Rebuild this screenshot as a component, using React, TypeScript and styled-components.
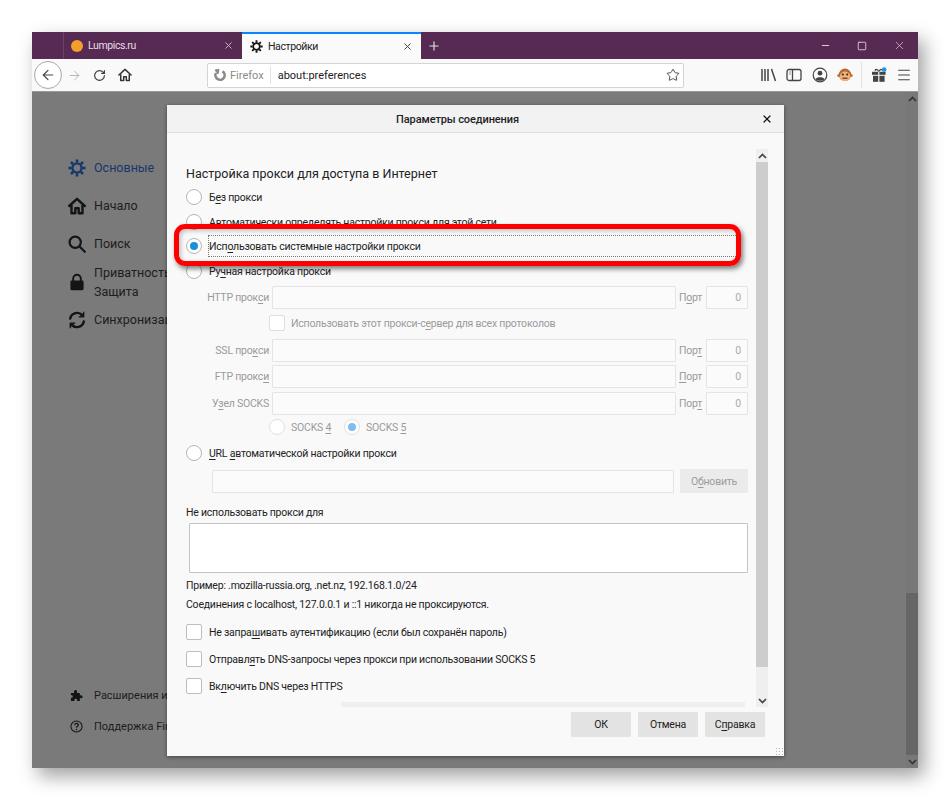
import React from 'react'
import styled, { createGlobalStyle } from 'styled-components'
import { ArrowLeft, ArrowRight, RotateCw, Star, Plus, X, Minus, Square, Menu } from 'lucide-react'

const Global = createGlobalStyle`
	html, body {
		margin: 0;
		padding: 0;
		background: #fff;
	}
	body {
		width: 950px;
		height: 800px;
		overflow: hidden;
		font-family: Roboto, "Noto Sans", sans-serif;
	}
	u {
		text-underline-offset: 2px;
		text-decoration-thickness: 1px;
	}
`

const Stage = styled.div`
	width: 950px;
	height: 800px;
	padding: 32px;
	box-sizing: border-box;
`

const Window = styled.div`
	width: 886px;
	height: 736px;
	display: flex;
	flex-direction: column;
	box-shadow: 6px 8px 18px rgba(0, 0, 0, 0.38);
`

const TabBar = styled.div`
	height: 27px;
	flex: none;
	background: #572a53;
	display: flex;
	align-items: stretch;
	padding-left: 31px;
`

const Tab = styled.div<{ $active?: boolean }>`
	width: 179px;
	box-sizing: border-box;
	display: flex;
	align-items: center;
	gap: 5px;
	padding: ${p => (p.$active ? '0 8px 0 8px' : '0 8px 0 7px')};
	font-size: 10.5px;
	letter-spacing: -0.4px;
	color: ${p => (p.$active ? '#222' : '#e6dce6')};
	background: ${p => (p.$active ? '#fafafa' : 'transparent')};
	border-top: ${p => (p.$active ? '2px solid #0a84ff' : 'none')};
	border-left: ${p => (p.$active ? 'none' : '1px solid #6b4268')};
`

const TabTitle = styled.span`
	flex: 1;
`

const Favicon = styled.span`
	width: 12px;
	height: 12px;
	border-radius: 50%;
	background: #f59d2d;
`

const NewTab = styled.div`
	width: 26px;
	display: flex;
	align-items: center;
	justify-content: center;
	color: #e6dce6;
`

const WindowButtons = styled.div`
	margin-left: auto;
	display: flex;
	align-items: center;
	gap: 26px;
	padding-right: 12px;
	color: #e6dce6;
`

const Toolbar = styled.div`
	height: 32px;
	flex: none;
	background: #f9f9fa;
	border-bottom: 1px solid #9a9a9a;
	display: flex;
	align-items: center;
	padding-left: 2px;
`

const BackButton = styled.div`
	width: 26px;
	height: 26px;
	border-radius: 50%;
	border: 1px solid #a8a8a8;
	background: #fff;
	display: flex;
	align-items: center;
	justify-content: center;
	color: #444;
`

const NavButton = styled.div<{ $dim?: boolean }>`
	width: 25px;
	display: flex;
	justify-content: center;
	color: ${p => (p.$dim ? '#b5b5b5' : '#3a3a3a')};
`

const UrlBar = styled.div`
	margin-left: 70px;
	width: 477px;
	height: 25px;
	box-sizing: border-box;
	flex: none;
	background: #fff;
	border: 1px solid #d4d4d6;
	border-radius: 2px;
	display: flex;
	align-items: center;
	padding: 0 3px 0 5px;
	font-size: 11px;
	color: #222;
`

const Identity = styled.div`
	display: flex;
	align-items: center;
	gap: 3px;
	color: #8a8a8a;
	padding-right: 6px;
	margin-right: 7px;
	border-right: 1px solid #e2e2e2;
	height: 18px;
`

const UrlText = styled.span`
	flex: 1;
`

const ToolIcons = styled.div`
	flex: 1;
	display: flex;
	align-items: center;
	padding-left: 72px;
	color: #444;
`

const ToolIcon = styled.div`
	width: 25.5px;
	flex: none;
	display: flex;
	justify-content: center;
`

const ToolSep = styled.div`
	width: 1px;
	height: 26px;
	background: #e4e4e4;
	margin: 0 4px 0 3px;
`

const Content = styled.div`
	flex: 1;
	min-height: 0;
	background: #7a7a7a;
	display: flex;
	position: relative;
`

const Sidebar = styled.nav`
	width: 874px;
	box-sizing: border-box;
	padding: 66px 0 32px 36px;
	display: flex;
	flex-direction: column;
	color: #1d1d1d;
	font-size: 12.5px;
`

const NavItem = styled.div<{ $active?: boolean; $gap: number }>`
	display: flex;
	align-items: center;
	gap: 8px;
	white-space: nowrap;
	line-height: 19px;
	margin-bottom: ${p => p.$gap}px;
	color: ${p => (p.$active ? '#17376b' : '#1d1d1d')};
`

const NavLabel = styled.div`
	display: flex;
	flex-direction: column;
`

const FootItem = styled(NavItem)`
	font-size: 11px;
	padding-left: 2px;
	gap: 11px;
`

const Spacer = styled.div`
	flex: 1;
`

const PageScroll = styled.div`
	width: 12px;
	flex: none;
	background: #787878;
	display: flex;
	flex-direction: column;
	align-items: center;
	color: #333;
`

const PageThumb = styled.div`
	height: 162px;
	width: 100%;
	flex: none;
	background: #666;
`

const Dialog = styled.div`
	position: absolute;
	left: 135px;
	top: 13px;
	width: 617px;
	height: 651px;
	background: #f9f9fa;
	box-shadow: 0 1px 4px rgba(0, 0, 0, 0.45);
	display: flex;
	flex-direction: column;
	font-size: 10.5px;
	letter-spacing: -0.22px;
	color: #222;
`

const DialogHead = styled.div`
	height: 28px;
	flex: none;
	box-sizing: border-box;
	background: #f2f2f2;
	border-bottom: 1px solid #dcdcdc;
	display: flex;
	align-items: center;
	justify-content: center;
	position: relative;
	padding: 2px 36px 0 0;
	font-size: 11px;
	font-weight: 500;
	letter-spacing: -0.1px;
	color: #222;
`

const CloseX = styled.div`
	position: absolute;
	right: 11px;
	top: 8px;
	color: #111;
	display: flex;
`

const DialogMain = styled.div`
	flex: 1;
	min-height: 0;
	display: flex;
	padding: 16px 17px 0 19px;
`

const Form = styled.div`
	width: 570px;
	flex: none;
	padding-top: 16px;
	display: flex;
	flex-direction: column;
`

const Heading = styled.div`
	font-size: 12.5px;
	line-height: 17px;
	letter-spacing: 0;
	margin-bottom: 3px;
`

const Row = styled.div<{ $h: number; $indent?: number; $gap?: number; $top?: number }>`
	height: ${p => p.$h}px;
	flex: none;
	display: flex;
	align-items: center;
	padding-left: ${p => p.$indent ?? 0}px;
	margin-top: ${p => p.$top ?? 0}px;
	white-space: nowrap;
	gap: ${p => p.$gap ?? 7}px;
`

const Radio = styled.span<{ $on?: boolean; $dim?: boolean }>`
	width: 16px;
	height: 16px;
	box-sizing: border-box;
	border-radius: 50%;
	border: 1px solid ${p => (p.$dim ? '#e0e0e0' : '#b5b5b5')};
	background: #fff;
	flex: none;
	display: flex;
	align-items: center;
	justify-content: center;
	&::after {
		content: '';
		display: ${p => (p.$on ? 'block' : 'none')};
		width: 8px;
		height: 8px;
		border-radius: 50%;
		background: ${p => (p.$dim ? '#7dbdf0' : '#1c8fdc')};
	}
`

const Check = styled.span<{ $dim?: boolean }>`
	width: 16px;
	height: 16px;
	box-sizing: border-box;
	border-radius: 2px;
	border: 1px solid ${p => (p.$dim ? '#dedede' : '#bdbdbd')};
	background: #fff;
	flex: none;
`

const Focused = styled.span`
	width: 530px;
	height: 22px;
	margin-left: -1px;
	box-sizing: border-box;
	border: 1px dotted #777;
	display: flex;
	align-items: center;
`

const Label = styled.span<{ $dim?: boolean; $after?: number }>`
	color: ${p => (p.$dim ? '#9a9a9a' : '#222')};
	line-height: 16px;
	padding-top: 2px;
	margin-right: ${p => p.$after ?? 0}px;
`

const FieldLabel = styled.span`
	width: 83px;
	flex: none;
	text-align: right;
	color: #9a9a9a;
`

const Input = styled.span<{ $w: number }>`
	width: ${p => p.$w}px;
	height: 23px;
	box-sizing: border-box;
	flex: none;
	background: #fbfbfb;
	border: 1px solid #e4e4e4;
	border-radius: 1px;
	color: #aaa;
	display: flex;
	align-items: center;
	justify-content: flex-end;
	padding-right: 6px;
`

const PortLabel = styled.span`
	width: 24px;
	flex: none;
	color: #9a9a9a;
`

const Update = styled.span`
	width: 68px;
	height: 24px;
	background: #ebebeb;
	color: #9c9c9c;
	border-radius: 1px;
	display: flex;
	align-items: center;
	justify-content: center;
`

const TextArea = styled.div`
	width: 559px;
	height: 50px;
	margin: 2px 0 3px 3px;
	box-sizing: border-box;
	flex: none;
	background: #fff;
	border: 1px solid #c4c4c4;
	border-radius: 1px;
`

const Note = styled.div`
	height: 19px;
	flex: none;
	display: flex;
	align-items: center;
	white-space: nowrap;
`

const HScroll = styled.div`
	width: 404px;
	height: 5px;
	flex: none;
	margin: 2px 0 0 155px;
	background: #efefef;
`

const VScroll = styled.div`
	width: 12px;
	height: 558px;
	flex: none;
	background: #efefef;
	display: flex;
	flex-direction: column;
	align-items: center;
	color: #444;
`

const ScrollBtn = styled.div`
	height: 13px;
	flex: none;
	display: flex;
	align-items: center;
	justify-content: center;
`

const VThumb = styled.div`
	width: 100%;
	height: 505px;
	flex: none;
	background: #cdcdcd;
`

const Buttons = styled.div`
	height: 25px;
	flex: none;
	display: flex;
	justify-content: flex-end;
	gap: 7px;
	padding-right: 19px;
	margin-bottom: 19px;
`

const Button = styled.div`
	width: 60px;
	background: #e3e3e3;
	border-radius: 1px;
	display: flex;
	align-items: center;
	justify-content: center;
`

const Grip = styled.div`
	position: absolute;
	right: 1px;
	bottom: 1px;
	width: 8px;
	height: 8px;
	background-image: radial-gradient(#b5b5b5 1px, transparent 1px);
	background-size: 3px 3px;
`

const Highlight = styled.div`
	position: absolute;
	left: 142px;
	top: 132px;
	width: 567px;
	height: 42px;
	box-sizing: border-box;
	border: 5px solid #f00;
	border-radius: 11px;
	box-shadow: 2px 3px 5px rgba(0, 0, 0, 0.5), inset 2px 2px 4px rgba(0, 0, 0, 0.22);
`

const Gear = ({ size, color }: { size: number; color: string }) => (
	<svg width={size} height={size} viewBox="0 0 18 18" fill="none">
		<circle cx="9" cy="9" r="4.6" stroke={color} strokeWidth="2.4" />
		<g stroke={color} strokeWidth="2.6" strokeLinecap="butt">
			<path d="M9 0.5V3.5M9 14.5V17.5M0.5 9H3.5M14.5 9H17.5M3 3L5.1 5.1M12.9 12.9L15 15M15 3L12.9 5.1M5.1 12.9L3 15" />
		</g>
	</svg>
)

const HomeIcon = ({ size, color, w }: { size: number; color: string; w: number }) => (
	<svg width={size} height={size} viewBox="0 0 18 18" fill="none" stroke={color} strokeWidth={w} strokeLinejoin="round">
		<path d="M1.2 9L9 1.8L16.8 9" strokeLinecap="round" />
		<path d="M3.5 8V16.2H7.3V11.2H10.7V16.2H14.5V8" />
	</svg>
)

const SearchIcon = () => (
	<svg width="18" height="18" viewBox="0 0 18 18" fill="none" stroke="#141414" strokeWidth="2.2" strokeLinecap="round">
		<circle cx="7.2" cy="7.2" r="5.6" />
		<path d="M11.5 11.5L16.8 16.8" />
	</svg>
)

const LockIcon = () => (
	<svg width="18" height="18" viewBox="0 0 18 18" fill="none">
		<path d="M5.2 8V5.6a3.8 3.8 0 0 1 7.6 0V8" stroke="#141414" strokeWidth="1.9" />
		<rect x="2.4" y="7.6" width="13.2" height="9.6" rx="1.4" fill="#141414" />
	</svg>
)

const SyncIcon = () => (
	<svg width="18" height="18" viewBox="0 0 18 18" fill="none" stroke="#141414" strokeWidth="2.4" strokeLinecap="round">
		<path d="M2.2 7.6A7 7 0 0 1 14.4 4.4" />
		<path d="M15.8 10.4A7 7 0 0 1 3.6 13.6" />
		<path d="M15.8 1.2V5.8H11.2" fill="#141414" strokeLinejoin="round" strokeWidth="1.2" />
		<path d="M2.2 16.8V12.2H6.8" fill="#141414" strokeLinejoin="round" strokeWidth="1.2" />
	</svg>
)

const PuzzleIcon = () => (
	<svg width="13" height="13" viewBox="0 0 14 14" fill="#141414">
		<path d="M1 4.2H4.6C4 2.6 4.4 1 6 1s2 1.6 1.4 3.2H10.6V7c1.4-.6 2.9-.2 2.9 1.4S12 10.4 10.6 9.8V13H7.6c.5-1.4 0-2.6-1.4-2.6S4.4 11.6 4.9 13H1V9.4c1.2.4 2-.2 2-1.3S2.2 6.4 1 6.8Z" />
	</svg>
)

const HelpIcon = () => (
	<svg width="13" height="13" viewBox="0 0 14 14" fill="none" stroke="#141414">
		<circle cx="7" cy="7" r="6" strokeWidth="1.1" />
		<path d="M5.1 5.6C5.1 3 8.9 3 8.9 5.3C8.9 6.7 7 6.7 7 8.4" strokeWidth="1.3" />
		<circle cx="7" cy="10.3" r=".8" fill="#141414" stroke="none" />
	</svg>
)

const ReloadGlyph = () => (
	<svg width="14" height="14" viewBox="0 0 14 14" fill="none" stroke="#8a8a8a" strokeWidth="2.6">
		<path d="M9.5 3.3A4.6 4.6 0 1 1 3 5" />
		<path d="M2 2L6 1.4L5 6Z" fill="#8a8a8a" strokeWidth="1" />
	</svg>
)

const Library = () => (
	<svg width="18" height="14" viewBox="0 0 18 14" fill="none" stroke="#444" strokeWidth="1.5">
		<path d="M2 1V13M5 1V13M8 1V13M11.5 1L15.5 13" />
	</svg>
)

const SidebarIcon = () => (
	<svg width="16" height="14" viewBox="0 0 16 14" fill="none" stroke="#444" strokeWidth="1.3">
		<rect x="1" y="1.5" width="14" height="11" rx="2" />
		<path d="M6.5 1.5V12.5" />
		<path d="M2.8 4H5M2.8 6H5" strokeWidth="1" stroke="#999" />
	</svg>
)

const Account = () => (
	<svg width="16" height="16" viewBox="0 0 16 16" fill="none" stroke="#444" strokeWidth="1.2">
		<circle cx="8" cy="8" r="6.8" />
		<circle cx="8" cy="6.2" r="2.4" fill="#444" stroke="none" />
		<path d="M3.6 12.2C4.6 9.6 11.4 9.6 12.4 12.2C10.5 14.2 5.5 14.2 3.6 12.2Z" fill="#444" stroke="none" />
	</svg>
)

const Monkey = () => (
	<svg width="16" height="16" viewBox="0 0 16 16">
		<circle cx="1.8" cy="8.5" r="1.6" fill="#c9733a" />
		<circle cx="14.2" cy="8.5" r="1.6" fill="#c9733a" />
		<circle cx="8" cy="7.8" r="6.2" fill="#b9682f" />
		<ellipse cx="8" cy="9.4" rx="5.2" ry="4.8" fill="#eeb27c" />
		<circle cx="5.8" cy="7.6" r="1" fill="#3a2010" />
		<circle cx="10.2" cy="7.6" r="1" fill="#3a2010" />
		<path d="M5.5 11.2H10.5" stroke="#3a2010" strokeWidth="1" />
	</svg>
)

const Gift = () => (
	<svg width="16" height="16" viewBox="0 0 16 16">
		<rect x="1" y="4.8" width="6.2" height="3" fill="#444" />
		<rect x="8.4" y="4.8" width="6.2" height="3" fill="#444" />
		<rect x="2" y="8.8" width="5.2" height="6" fill="#444" />
		<rect x="8.4" y="8.8" width="5.2" height="6" fill="#444" />
		<path d="M7.8 4.5C6 1.5 3.4 2 4.4 4M7.8 4.5C9.5 1.5 12 2 11.2 4" stroke="#444" fill="none" strokeWidth="1.1" />
		<circle cx="13.2" cy="2.6" r="2.3" fill="#1e96e8" />
	</svg>
)

const Chevron = ({ up }: { up?: boolean }) => (
	<svg width="9" height="6" viewBox="0 0 9 6" fill="none" stroke="currentColor" strokeWidth="1.7">
		<path d={up ? 'M1 5L4.5 1.5L8 5' : 'M1 1L4.5 4.5L8 1'} />
	</svg>
)

const ProxyField = ({ label }: { label: React.ReactNode }) => (
	<>
		<FieldLabel>{label}</FieldLabel>
		<Input $w={404} />
	</>
)

const PortField = ({ label }: { label: React.ReactNode }) => (
	<>
		<PortLabel>{label}</PortLabel>
		<Input $w={42}>0</Input>
	</>
)

const App = () => (
	<>
		<Global />
		<Stage>
			<Window>
				<TabBar>
					<Tab>
						<Favicon />
						<TabTitle>Lumpics.ru</TabTitle>
						<X size={11} color="#cdbccb" />
					</Tab>
					<Tab $active>
						<Gear size={13} color="#111" />
						<TabTitle>Настройки</TabTitle>
						<X size={11} color="#333" />
					</Tab>
					<NewTab>
						<Plus size={14} />
					</NewTab>
					<WindowButtons>
						<Minus size={11} />
						<Square size={10} />
						<X size={13} strokeWidth={1.2} />
					</WindowButtons>
				</TabBar>
				<Toolbar>
					<BackButton>
						<ArrowLeft size={16} strokeWidth={1.8} />
					</BackButton>
					<NavButton $dim>
						<ArrowRight size={15} strokeWidth={1.6} />
					</NavButton>
					<NavButton>
						<RotateCw size={13} strokeWidth={2.1} />
					</NavButton>
					<NavButton>
						<HomeIcon size={14} color="#333" w={1.9} />
					</NavButton>
					<UrlBar>
						<Identity>
							<ReloadGlyph />
							Firefox
						</Identity>
						<UrlText>about:preferences</UrlText>
						<Star size={14} color="#444" strokeWidth={1.6} />
					</UrlBar>
					<ToolIcons>
						<ToolIcon>
							<Library />
						</ToolIcon>
						<ToolIcon>
							<SidebarIcon />
						</ToolIcon>
						<ToolIcon>
							<Account />
						</ToolIcon>
						<ToolIcon>
							<Monkey />
						</ToolIcon>
						<ToolSep />
						<ToolIcon>
							<Gift />
						</ToolIcon>
						<ToolIcon>
							<Menu size={16} strokeWidth={1.6} />
						</ToolIcon>
					</ToolIcons>
				</Toolbar>
				<Content>
					<Sidebar>
						<NavItem $active $gap={19}>
							<Gear size={18} color="#17376b" />
							Основные
						</NavItem>
						<NavItem $gap={19}>
							<HomeIcon size={18} color="#141414" w={2.4} />
							Начало
						</NavItem>
						<NavItem $gap={10}>
							<SearchIcon />
							Поиск
						</NavItem>
						<NavItem $gap={9}>
							<LockIcon />
							<NavLabel>
								<span>Приватность и</span>
								<span>Защита</span>
							</NavLabel>
						</NavItem>
						<NavItem $gap={0}>
							<SyncIcon />
							Синхронизация
						</NavItem>
						<Spacer />
						<FootItem $gap={12}>
							<PuzzleIcon />
							Расширения и темы
						</FootItem>
						<FootItem $gap={0}>
							<HelpIcon />
							Поддержка Firefox
						</FootItem>
					</Sidebar>
					<PageScroll>
						<ScrollBtn>
							<Chevron up />
						</ScrollBtn>
						<Spacer />
						<PageThumb />
						<ScrollBtn>
							<Chevron />
						</ScrollBtn>
					</PageScroll>
					<Dialog>
						<DialogHead>
							Параметры соединения
							<CloseX>
								<X size={12} strokeWidth={2.4} />
							</CloseX>
						</DialogHead>
						<DialogMain>
							<Form>
								<Heading>Настройка прокси для доступа в Интернет</Heading>
								<Row $h={24}>
									<Radio />
									<Label>Б<u>е</u>з прокси</Label>
								</Row>
								<Row $h={26}>
									<Radio />
									<Label>Автоматически определять настройки прокси для этой сети</Label>
								</Row>
								<Row $h={22}>
									<Radio $on />
									<Focused>
										<Label>Исп<u>о</u>льзовать системные настройки прокси</Label>
									</Focused>
								</Row>
								<Row $h={28}>
									<Radio />
									<Label>Ру<u>ч</u>ная настройка прокси</Label>
								</Row>
								<Row $h={24} $gap={3}>
									<ProxyField label={<>HTTP прок<u>с</u>и</>} />
									<PortField label={<>П<u>о</u>рт</>} />
								</Row>
								<Row $h={28} $indent={83} $gap={6}>
									<Check $dim />
									<Label $dim>Использовать этот прокси-с<u>е</u>рвер для всех протоколов</Label>
								</Row>
								<Row $h={26} $gap={3}>
									<ProxyField label={<>SSL про<u>к</u>си</>} />
									<PortField label={<>Пор<u>т</u></>} />
								</Row>
								<Row $h={26} $gap={3}>
									<ProxyField label={<>FTP прокс<u>и</u></>} />
									<PortField label={<><u>П</u>орт</>} />
								</Row>
								<Row $h={28} $gap={3}>
									<ProxyField label={<>У<u>з</u>ел SOCKS</>} />
									<PortField label={<>Пор<u>т</u></>} />
								</Row>
								<Row $h={20} $indent={83} $gap={6}>
									<Radio $dim />
									<Label $dim $after={7}>SOCKS <u>4</u></Label>
									<Radio $dim $on />
									<Label $dim>SOCKS <u>5</u></Label>
								</Row>
								<Row $h={32}>
									<Radio />
									<Label><u>U</u>RL <u>а</u>втоматической настройки прокси</Label>
								</Row>
								<Row $h={24} $indent={26} $gap={6}>
									<Input $w={462} />
									<Update>О<u>б</u>новить</Update>
								</Row>
								<Row $h={18} $top={10}>
									<Label>Не использовать прокси для</Label>
								</Row>
								<TextArea />
								<Note>Пример: .mozilla-russia.org, .net.nz, 192.168.1.0/24</Note>
								<Note>Соединения с localhost, 127.0.0.1 и ::1 никогда не проксируются.</Note>
								<Row $h={28} $top={4}>
									<Check />
									<Label>Не запра<u>ш</u>ивать аутентификацию (если был сохранён пароль)</Label>
								</Row>
								<Row $h={26}>
									<Check />
									<Label>Отправл<u>я</u>ть DNS-запросы через прокси при использовании SOCKS 5</Label>
								</Row>
								<Row $h={28}>
									<Check />
									<Label>Вк<u>л</u>ючить DNS через HTTPS</Label>
								</Row>
								<HScroll />
							</Form>
							<VScroll>
								<ScrollBtn>
									<Chevron up />
								</ScrollBtn>
								<VThumb />
								<Spacer />
								<ScrollBtn>
									<Chevron />
								</ScrollBtn>
							</VScroll>
						</DialogMain>
						<Buttons>
							<Button>ОК</Button>
							<Button>Отмена</Button>
							<Button>С<u>п</u>равка</Button>
						</Buttons>
						<Grip />
					</Dialog>
					<Highlight />
				</Content>
			</Window>
		</Stage>
	</>
)

export default App
